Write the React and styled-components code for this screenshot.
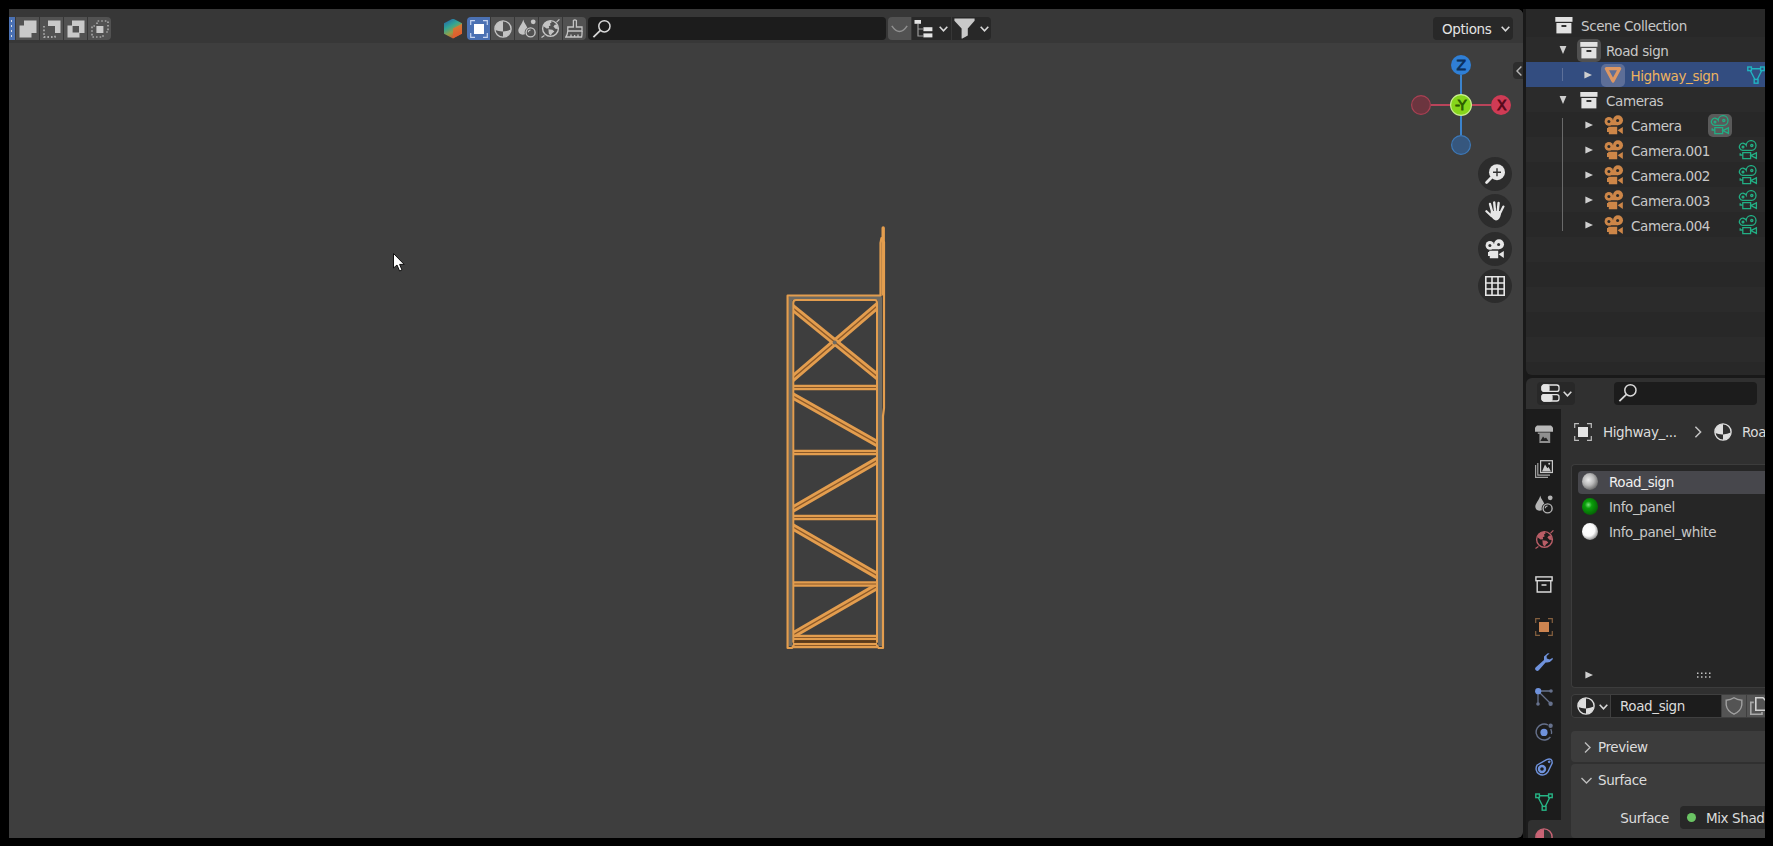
import styled, { createGlobalStyle } from 'styled-components'

const GlobalStyle = createGlobalStyle`
    * {
        box-sizing: border-box;
    }

    body {
        margin: 0;
        background: #000000;
        overflow: hidden;
    }

    svg {
        display: block;
        flex: none;
    }
`

const Screen = styled.div`
    display: flex;
    width: 1773px;
    height: 846px;
    padding: 9px 8px 8px 9px;
    background: #000000;
    font-family: 'DejaVu Sans', sans-serif;
    font-size: 13.5px;
    letter-spacing: -0.4px;
    line-height: 18px;
    color: #d6d6d6;
    white-space: nowrap;
    cursor: default;
`

/* ---------- icons ---------- */

const Chevron = ({ color = '#d8d8d8', size = 9 }) => (
    <svg width={size} height={size} viewBox="0 0 9 9" fill="none" stroke={color} strokeWidth="1.6">
        <path d="M0.7 2.8 L4.5 6.8 L8.3 2.8" />
    </svg>
)

const SearchIcon = () => (
    <svg width="20" height="20" viewBox="0 0 20 20" fill="none" stroke="#d8d8d8" strokeWidth="1.5">
        <circle cx="12.4" cy="7.3" r="5.6" />
        <path d="M8.4 11.3 L1.4 18.2" strokeWidth="1.8" />
    </svg>
)

const ObjectIcon = ({ fill = '#e4e4e4', line = '#bdbdbd' }) => (
    <svg width="18" height="18" viewBox="0 0 18 18">
        <rect x="4" y="4" width="10" height="10" fill={fill} />
        <path
            d="M0.7 5 V0.7 H5 M13 0.7 H17.3 V5 M17.3 13 V17.3 H13 M5 17.3 H0.7 V13"
            fill="none"
            stroke={line}
            strokeWidth="1.2"
        />
    </svg>
)

const MaterialIcon = ({ color = '#dedede' }) => (
    <svg width="18" height="18" viewBox="0 0 18 18">
        <circle cx="9" cy="9" r="8.1" fill="none" stroke={color} strokeWidth="1.4" />
        <path d="M9 1 A8 8 0 0 0 1.2 10 Q5 11.6 9 11.4 Z" fill={color} />
        <path d="M9 11.4 Q13.5 11.2 16.8 9.5 A8 8 0 0 1 9 17 Z" fill={color} />
    </svg>
)

const SceneIcon = ({ color = '#c4c4c4' }) => (
    <svg width="18" height="19" viewBox="0 0 18 19">
        <path
            d="M5.2 0.5 C6 4 8.6 6.6 9.3 8.7 C7 10 6.2 12.5 6.9 15.3 C3.5 16.7 0.3 14.7 0.3 11.6 C0.3 8.5 4.3 5 5.2 0.5 Z"
            fill={color}
        />
        <circle cx="15.2" cy="2.8" r="2.4" fill={color} />
        <circle cx="12.6" cy="13.4" r="4.5" fill="none" stroke={color} strokeWidth="1.4" />
        <path d="M10.3 13.3 A2.3 2.3 0 0 1 12.6 11" fill="none" stroke={color} strokeWidth="1.2" />
    </svg>
)

const WorldIcon = ({ color = '#c4c4c4' }) => (
    <svg width="19" height="19" viewBox="0 0 19 19">
        <circle cx="9.5" cy="9.5" r="7.9" fill="none" stroke={color} strokeWidth="1.4" />
        <path d="M3 4.8 Q6 1.2 9.8 2 L10.6 3.4 L9 4.6 L9.6 6.4 L7.8 7.2 L8.2 9.2 L5.6 9.6 L2.4 7.2 Z" fill={color} />
        <path d="M7.4 10.2 L11.4 10.8 L13.4 12.6 L11 14.4 L9.6 16.8 L7.8 14.6 Z" fill={color} />
        <path d="M12.4 7.6 L14 5.4 L16.6 6.2 L17 10 L14.4 9.8 Z" fill={color} />
        <path d="M0.5 18.4 L3.4 16.4 M15.6 3.2 L18.4 0.4" stroke={color} strokeWidth="1.2" />
    </svg>
)

const BrushIcon = () => (
    <svg width="19" height="20" viewBox="0 0 19 20" fill="none" stroke="#c4c4c4" strokeWidth="1.3">
        <path d="M8.4 8 V1.6 Q9.9 0.2 11.4 1.6 V8 H17 V12 H2.8 V8 Z" />
        <path d="M2.8 12 Q2.4 16.4 0.8 18 H16.6 Q17.2 15.4 17 12 M6 18 V15.6 M9.6 18 V16 M13 18 V15.6" />
    </svg>
)

const HexIcon = () => (
    <HexShape>
        <HexCut />
    </HexShape>
)

const HexShape = styled.div`
    width: 18px;
    height: 20px;
    clip-path: polygon(50% 0, 100% 24%, 100% 76%, 50% 100%, 0 76%, 0 24%);
    background: linear-gradient(150deg, #2565a8 5%, #31a594 35%, #8fa04a 58%, #d8562c 80%);
`

const HexCut = styled.div`
    width: 18px;
    height: 20px;
    clip-path: polygon(50% 50%, 100% 26%, 100% 76%, 50% 100%);
    background: linear-gradient(160deg, #b9a145, #e0602d 75%);
`

const CollectionIcon = ({ outline }) => (
    <svg width="18" height="17" viewBox="0 0 18 17">
        {outline ? (
            <g fill="none" stroke="#dadada" strokeWidth="1.4">
                <rect x="0.9" y="0.9" width="16.2" height="3.8" />
                <path d="M2.2 5 V16 H15.8 V5 M6.5 9 H11.5" />
            </g>
        ) : (
            <g>
                <rect x="0.3" y="0" width="17.2" height="4.8" fill="#e2e2e2" />
                <rect x="1.4" y="6" width="15" height="10.4" fill="#e2e2e2" />
                <rect x="6.3" y="8" width="5.2" height="2" rx="0.8" fill="#2f2f2f" />
            </g>
        )}
    </svg>
)

const CameraIcon = ({ color = '#cd8648', hole = '#2a2a2a' }) => (
    <svg width="20" height="20" viewBox="0 0 20 20">
        <g fill={color}>
            <circle cx="4.9" cy="6.4" r="4.3" />
            <circle cx="14" cy="5.2" r="5" />
            <path d="M5 6 H14 V10.2 H5 Z" />
            <path d="M4.2 11.8 H13.2 V19.2 H4.8 V17 H3 V13 H4.2 Z" />
            <path d="M13.6 15.3 L18.8 12 V19 Z" />
        </g>
        <circle cx="4.9" cy="6.6" r="1.5" fill={hole} />
        <circle cx="13.6" cy="5.4" r="1.5" fill={hole} />
    </svg>
)

const CameraDataIcon = () => (
    <svg width="20" height="20" viewBox="0 0 20 20" fill="none" stroke="#22ae84" strokeWidth="1.3">
        <path d="M4.6 10.4 A3.6 3.6 0 1 1 8.2 5.2 A4.9 4.9 0 1 1 13.6 10.4 Z" />
        <circle cx="5" cy="7" r="0.9" />
        <circle cx="13.8" cy="5.6" r="1.1" />
        <path d="M4.8 12.6 H12.6 V18.6 H4.8 Z M4.8 15 H2.2 V13.2 M12.8 15.6 L18.4 12.8 V18.4 Z" />
    </svg>
)

const MeshIcon = ({ color }) => (
    <svg width="18" height="18" viewBox="0 0 18 18" fill="none" stroke={color} strokeWidth="1.4">
        <rect x="0.8" y="1" width="3.6" height="3.6" />
        <rect x="13.6" y="1" width="3.6" height="3.6" />
        <rect x="7.2" y="13.4" width="3.8" height="3.8" />
        <path d="M4.6 2.8 H13.4 M3.4 4.8 L7.8 13.2 M14.6 4.8 L10.4 13.2" />
    </svg>
)

const MeshObjectIcon = () => (
    <svg width="18" height="18" viewBox="0 0 18 18">
        <path d="M2.3 2.6 H15.7 L9 15 Z" fill="none" stroke="#dd9763" strokeWidth="3.2" strokeLinejoin="round" />
    </svg>
)

const Disclosure = ({ open }) => (
    <svg width="8" height="8" viewBox="0 0 8 8" fill="#cfcfcf">
        <path d={open ? 'M0.6 0 H7.4 L4 8 Z' : 'M0.4 0.4 L8 4 L0.4 7.6 Z'} />
    </svg>
)

const PrinterIcon = () => (
    <svg width="18" height="18" viewBox="0 0 18 18">
        <path d="M0 6.8 V2.4 L2 0.5 H16 L18 2.4 V6.8 Z" fill="#b8b8b8" />
        <path d="M2.8 7.4 H15.2 V18 H4.4 V9 H2.8 Z" fill="#8f8f8f" />
        <path d="M5.4 16 L8 11.5 L9.8 13.6 L11 12.4 L13.4 16 Z" fill="#232323" />
    </svg>
)

const ViewLayerIcon = () => (
    <svg width="18" height="18" viewBox="0 0 18 18" fill="none" stroke="#a4a4a4" strokeWidth="1.2">
        <path d="M0.6 5 V17.4 H13 M2.8 3 V15.2 H15" />
        <rect x="5.6" y="0.7" width="11.8" height="11.8" stroke="#c8c8c8" />
        <path d="M7 11.6 L10 4.5 L12.4 8.2 L13.6 7 L16 11.6 Z" fill="#c8c8c8" stroke="none" />
        <circle cx="14.2" cy="3.8" r="1" fill="#c8c8c8" stroke="none" />
    </svg>
)

const WrenchIcon = () => (
    <svg width="18" height="18" viewBox="0 0 18 18" fill="#6f92dc">
        <path d="M12.8 0.3 L9 3.4 V7 L0.8 14.2 A2.1 2.1 0 0 0 3.8 17.2 L10.6 9.4 Q15 10.2 17.6 6.6 L17.8 4.8 L14.6 6.6 L11.8 5.4 L11.6 3 L14.6 0.6 Z" />
    </svg>
)

const ParticlesIcon = () => (
    <svg width="18" height="18" viewBox="0 0 18 18">
        <path d="M3 3 H16 M3 3 V16 M3 3 L16 16" stroke="#66718c" strokeWidth="1.3" />
        <circle cx="3.2" cy="3.2" r="3.1" fill="#6f92dc" />
        <circle cx="16" cy="3" r="1.8" fill="#66718c" />
        <circle cx="3" cy="16" r="1.8" fill="#66718c" />
        <circle cx="15.6" cy="15.8" r="2.2" fill="#66718c" />
    </svg>
)

const PhysicsIcon = () => (
    <svg width="18" height="18" viewBox="0 0 18 18">
        <path d="M13 2 A8 8 0 1 0 15.4 14" fill="none" stroke="#66718c" strokeWidth="1.4" />
        <circle cx="9" cy="9.4" r="3.6" fill="#6f92dc" />
        <circle cx="15.6" cy="2.8" r="2.2" fill="#66718c" />
        <path d="M15.8 6 Q17 9 16.4 11" fill="none" stroke="#66718c" strokeWidth="1.3" />
    </svg>
)

const ConstraintIcon = () => (
    <svg width="18" height="18" viewBox="0 0 18 18" fill="none" stroke="#6f92dc">
        <path d="M2.2 7 L11.6 1.6 Q17.4 -0.4 17.2 5 L12.8 14.2 A6.4 6.4 0 1 1 2.2 7 Z" strokeWidth="1.4" />
        <circle cx="7" cy="11" r="3" strokeWidth="2.4" />
        <circle cx="14.2" cy="3.8" r="0.9" fill="#6f92dc" />
    </svg>
)

const ShieldIcon = () => (
    <svg width="18" height="18" viewBox="0 0 18 18" fill="none" stroke="#a0a0a0" strokeWidth="1.4">
        <path d="M9 0.8 Q12 3 16.8 3.2 V8 Q16 14 9 17.2 Q2 14 1.2 8 V3.2 Q6 3 9 0.8 Z" />
    </svg>
)

const CopyIcon = () => (
    <svg width="18" height="18" viewBox="0 0 18 18" fill="none" stroke="#d0d0d0" strokeWidth="1.6">
        <path d="M5.8 0.8 H13 L17.2 5 V13.2 H5.8 Z" />
        <path d="M3.8 5.4 H0.8 V17.2 H12 V15" stroke="#a8a8a8" />
    </svg>
)

/* ---------- 3D viewport ---------- */

const Viewport = styled.main`
    position: relative;
    display: flex;
    flex-direction: column;
    width: 1514px;
    height: 829px;
    background: #3e3e3e;
    border-radius: 0 6px 6px 0;
    overflow: hidden;
`

const ToolBar = styled.header`
    display: flex;
    align-items: center;
    height: 34px;
    padding: 5px 10px 0 0;
    background: #373737;
`

const ButtonStrip = styled.div`
    display: flex;
    gap: 1px;
    border-radius: ${(props) => props.$radius || '4px'};
    overflow: hidden;
    margin-left: ${(props) => props.$gap}px;
`

const ToolButton = styled.button`
    display: flex;
    align-items: center;
    justify-content: center;
    gap: ${(props) => props.$gap || 0}px;
    width: ${(props) => props.$width || 23}px;
    height: 23px;
    padding: 0 ${(props) => (props.$dark ? 1 : 0)}px 0 0;
    border: 0;
    background: ${(props) => (props.$active ? '#4b71b3' : props.$dark ? '#282828' : '#525252')};
`

const SearchField = styled.div`
    display: flex;
    align-items: center;
    width: ${(props) => props.$width}px;
    height: 23px;
    padding-left: 4px;
    border-radius: 4px;
    background: #1c1c1c;
    margin-left: ${(props) => props.$gap}px;
`

const OptionsButton = styled.button`
    display: flex;
    align-items: center;
    justify-content: space-between;
    width: 80px;
    height: 23px;
    margin-left: auto;
    padding: 0 3px 0 9px;
    border: 0;
    border-radius: 4px;
    background: #282828;
    color: #e4e4e4;
    font: inherit;
    letter-spacing: -0.4px;
`

const SelectModeIcon = ({ mode }) => (
    <svg width="18" height="18" viewBox="0 0 18 18" fill="#c9c9c9">
        {mode === 'extend' && <path d="M5 0.5 H17.5 V13 H12.5 V17.5 H0.5 V5.5 H5 Z" />}
        {mode === 'subtract' && (
            <g>
                <path d="M5 0.5 H17.5 V13 H12 V6 H5 Z" />
                <path d="M1 6 V17 H12 V14" fill="none" stroke="#c9c9c9" strokeWidth="1.3" strokeDasharray="1.6 2" />
            </g>
        )}
        {mode === 'difference' && (
            <path fillRule="evenodd" d="M5 0.5 H17.5 V13 H12.5 V17.5 H0.5 V5.5 H5 Z M5.6 6 H12 V12.4 H5.6 Z" />
        )}
        {mode === 'intersect' && (
            <g>
                <rect x="5.4" y="6" width="7" height="7" />
                <path
                    d="M6 4 V1 H17 V12 H14 M4 6 H1 V17 H12 V14"
                    fill="none"
                    stroke="#c9c9c9"
                    strokeWidth="1.2"
                    strokeDasharray="1.6 2"
                />
            </g>
        )}
    </svg>
)

const FirstMode = styled.div`
    width: 6px;
    height: 23px;
    padding: 3px 1px 3px 2px;
    background: #4b71b3;

    &::after {
        content: '';
        display: block;
        width: 1px;
        height: 17px;
        background: repeating-linear-gradient(#dddddd 0 2px, transparent 2px 5px);
    }
`

const TreeIcon = () => (
    <svg width="19" height="18" viewBox="0 0 19 18">
        <path d="M4 4 V16 H9 M4 9 H9" fill="none" stroke="#9a9a9a" strokeWidth="1.2" />
        <rect x="0.5" y="0" width="6.5" height="3.8" fill="#e4e4e4" />
        <rect x="9.4" y="7.2" width="9" height="4" fill="#e4e4e4" />
        <rect x="9.4" y="13.4" width="9" height="4" fill="#e4e4e4" />
    </svg>
)

const FilterIcon = () => (
    <svg width="21" height="21" viewBox="0 0 21 21" fill="#c9c9c9">
        <path d="M0.4 0.6 H20.6 V2.8 L13.8 10.4 V17.4 L8.4 20.6 H7.6 V10.4 L0.4 2.8 Z" />
    </svg>
)

const Scene = styled.div`
    position: relative;
    flex: 1;
`

const Canvas = styled.svg`
    position: absolute;
    inset: 0;
`

const ORANGE = '#e39d4e'

const rungs = [387.5, 452.5, 517.5, 584, 637.5, 645.5]

const braces = [
    [881, 302.8, 788, 382.3],
    [788, 304, 881, 379.6],
    [788, 393.2, 881, 445.8],
    [881, 458.1, 788, 511.9],
    [788, 524.1, 881, 577.9],
    [881, 584.1, 788, 637.9],
]

const Truss = () => (
    <g fill="none" stroke={ORANGE} strokeLinejoin="round" strokeLinecap="round">
        <clipPath id="bay">
            <rect x="793" y="299" width="84" height="348" />
        </clipPath>
        <path d="M790.5 646 V298 H880 V646" stroke="#6e6a62" strokeWidth="4" strokeLinecap="butt" />
        <g clipPath="url(#bay)">
            {braces.map(([x1, y1, x2, y2], i) => (
                <g key={i}>
                    <path d={`M${x1} ${y1} L${x2} ${y2}`} strokeWidth="7" />
                    <path d={`M${x1} ${y1} L${x2} ${y2}`} stroke="#8a5828" strokeWidth="1.3" />
                </g>
            ))}
        </g>
        {rungs.map((y) => (
            <g key={y} strokeLinecap="butt">
                <path d={`M793 ${y} H877`} strokeWidth="5.6" />
                <path d={`M793 ${y} H877`} stroke="#8a5828" strokeWidth="1.1" />
            </g>
        ))}
        <path d="M794 641.5 H876" stroke="#5d3a17" strokeWidth="2.4" strokeLinecap="butt" />
        <circle cx="834.7" cy="342.5" r="2" fill="#6e6a62" stroke="none" />
        <path d="M793.3 642 V303 Q793.3 300 796 300 H875 Q877 300 877 303 V642" strokeWidth="2" />
        <path d="M883.2 228 V294" strokeWidth="3.4" />
        <path
            d="M880.7 295.5 H787.6 V648 H792 L793.5 645.5 M877 645.5 L878.5 648 H883 V416 L884 408 V242 M881.5 238 L880.5 243 V295"
            strokeWidth="2.2"
        />
    </g>
)

const Gizmo = () => (
    <g>
        <path d="M1461 75 V135" stroke="#3b83cd" strokeWidth="2" />
        <path d="M1431 105 H1491" stroke="#b9445a" strokeWidth="2" />
        <circle cx="1461" cy="65" r="10" fill="#2f7fd6" />
        <circle cx="1501" cy="105" r="10" fill="#cf3b55" />
        <circle cx="1421" cy="105" r="9.4" fill="#6c353f" stroke="#a84053" strokeWidth="1.2" />
        <circle cx="1461" cy="145" r="9.4" fill="#36577e" stroke="#3d79b8" strokeWidth="1.2" />
        <circle cx="1461" cy="105" r="10.4" fill="#86d61b" stroke="#c9ef8f" strokeWidth="1.2" />
        <AxisLabel x="1461" y="70" fill="#0b2f5c" stroke="#0b2f5c">
            Z
        </AxisLabel>
        <AxisLabel x="1501.5" y="110" fill="#57091a" stroke="#57091a">
            X
        </AxisLabel>
        <AxisLabel x="1460.5" y="110" fill="#2c5c00" stroke="#2c5c00">
            -Y
        </AxisLabel>
    </g>
)

const AxisLabel = styled.text`
    font-family: 'DejaVu Sans', sans-serif;
    font-size: 14px;
    stroke-width: 0.8px;
    letter-spacing: -0.4px;
    text-anchor: middle;
`

const Pointer = () => (
    <path
        d="M393.5 253.5 V268 L397 265 L399.6 271 L402 270 L399.6 264.4 H404.2 Z"
        fill="#ffffff"
        stroke="#111111"
        strokeWidth="1"
    />
)

const NavButtons = styled.div`
    position: absolute;
    top: 114px;
    right: 11px;
    display: flex;
    flex-direction: column;
    gap: 3.4px;
`

const NavButton = styled.button`
    display: flex;
    align-items: center;
    justify-content: center;
    width: 34px;
    height: 34px;
    padding: 0;
    border: 0;
    border-radius: 50%;
    background: #2c2c2c;
`

const SidebarTab = styled.div`
    position: absolute;
    top: 19px;
    right: 0;
    display: flex;
    align-items: center;
    justify-content: center;
    width: 10px;
    height: 17px;
    padding-left: 1px;
    border-radius: 4px 0 0 4px;
    background: #2d2d2d;
`

const ZoomIcon = () => (
    <svg width="20" height="20" viewBox="0 0 20 20">
        <circle cx="12" cy="8.2" r="8" fill="#e6e6e6" />
        <path d="M6.4 13.6 L1.6 18.4" stroke="#e6e6e6" strokeWidth="2.8" strokeLinecap="round" />
        <path d="M8 8.2 H16 M12 4.2 V12.2" stroke="#303030" strokeWidth="1.4" />
    </svg>
)

const HandIcon = () => (
    <svg width="20" height="20" viewBox="0 0 20 20" fill="none" stroke="#e6e6e6" strokeLinecap="round">
        <path d="M5 3 L7.2 11 M9.2 1.4 L10 10 M13.6 1.9 L12.8 10" strokeWidth="2.4" />
        <path d="M18.4 5.6 L15.2 12 M1.4 10.2 L6.4 15" strokeWidth="2.2" />
        <path d="M6 10 H15.8 L16 13 Q14.8 19.4 11 19.4 Q8.4 19.4 5 14 Z" fill="#e6e6e6" stroke="none" />
    </svg>
)

const GridIcon = () => (
    <svg width="20" height="20" viewBox="0 0 20 20" fill="none" stroke="#e6e6e6" strokeWidth="1.6">
        <path d="M0.8 0.8 H19.2 V19.2 H0.8 Z M7 1 V19 M13 1 V19 M1 7 H19 M1 13 H19" />
    </svg>
)

/* ---------- outliner ---------- */

const SidePanels = styled.aside`
    display: flex;
    flex-direction: column;
    gap: 3px;
    width: 242px;
    height: 829px;
    padding-left: 3px;
    background: #191919;
`

const Outliner = styled.section`
    flex: none;
    height: 366px;
    padding-top: 3px;
    border-radius: 0 0 0 6px;
    background: repeating-linear-gradient(#282828 0 25px, #2b2b2b 25px 50px) 0 3px;
    overflow: hidden;
`

const TreeRow = styled.div`
    display: flex;
    align-items: center;
    height: 25px;
    padding: 1px 0 0 ${(props) => props.$indent}px;
    background: ${(props) => (props.$selected ? '#334d80' : 'transparent')};
    color: ${(props) => (props.$selected ? '#edb35e' : '#c8c8c8')};
`

const TreeArrow = styled.span`
    display: flex;
    justify-content: center;
    width: 16px;
`

const TreeIconBox = styled.span`
    display: flex;
    align-items: center;
    justify-content: center;
    flex: none;
    width: 24px;
    height: 23px;
    border-radius: 5px;
    background: ${(props) => props.$fill || 'transparent'};
    margin-left: ${(props) => props.$gap || 0}px;
`

const TreeLabel = styled.span`
    flex: none;
    margin-left: 5.5px;
    padding-top: 2px;
    width: ${(props) => (props.$width ? props.$width + 'px' : 'auto')};
`

const Branch = styled.div`
    position: relative;

    &::before {
        content: '';
        position: absolute;
        left: 36px;
        top: ${(props) => props.$top}px;
        bottom: ${(props) => props.$bottom}px;
        width: 1px;
        background: ${(props) => props.$line};
    }
`

const cameras = ['Camera', 'Camera.001', 'Camera.002', 'Camera.003', 'Camera.004']

/* ---------- properties editor ---------- */

const Properties = styled.section`
    flex: 1;
    display: flex;
    flex-direction: column;
    background: #303030;
    border-radius: 6px 0 0 0;
    overflow: hidden;
`

const PropertiesHeader = styled.div`
    display: flex;
    align-items: center;
    height: 31px;
    padding: 0 0 1px 11px;
`

const EditorButton = styled.button`
    display: flex;
    align-items: center;
    justify-content: space-between;
    width: 38px;
    height: 23px;
    padding: 0 3px 0 4px;
    border: 0;
    border-radius: 4px;
    background: #282828;
`

const PropertiesBody = styled.div`
    display: flex;
    flex: 1;
    min-height: 0;
`

const Tabs = styled.nav`
    display: flex;
    flex-direction: column;
    flex: none;
    width: 35px;
    padding: 8px 0 0 2px;
    background: #1c1c1c;
    overflow: hidden;
`

const Tab = styled.div`
    display: flex;
    align-items: center;
    justify-content: center;
    flex: none;
    height: 34px;
    margin-top: ${(props) => props.$gap ?? 1}px;
    padding-right: 1px;
    border-radius: 4px 0 0 4px;
    background: ${(props) => (props.$active ? '#303030' : 'transparent')};
`

const Content = styled.div`
    display: flex;
    flex-direction: column;
    width: 204px;
    padding-left: 10px;
    color: #dcdcdc;
    overflow: hidden;
`

const Breadcrumb = styled.div`
    display: flex;
    align-items: center;
    height: 45px;
    padding-left: 3px;
    flex: none;
`

const CrumbLabel = styled.span`
    flex: none;
    width: ${(props) => (props.$width ? props.$width + 'px' : 'auto')};
    margin-left: ${(props) => props.$gap || 11}px;
`

const CrumbArrow = styled.svg`
    margin-right: 10px;
`

const SlotList = styled.div`
    display: flex;
    flex-direction: column;
    flex: none;
    height: 224px;
    margin-top: 10px;
    padding: 6px 0 0 6px;
    border: 1px solid #3c3c3c;
    border-right: 0;
    border-radius: 4px 0 0 4px;
    background: #262626;
`

const Slot = styled.div`
    display: flex;
    align-items: center;
    gap: 11px;
    flex: none;
    height: 23px;
    margin-bottom: 2px;
    padding: 0 0 2px 4px;
    border-radius: 4px 0 0 4px;
    background: ${(props) => (props.$selected ? '#47474c' : 'transparent')};
    color: ${(props) => (props.$selected ? '#f0f0f0' : '#c8c8c8')};
`

const Ball = styled.span`
    width: 16px;
    height: 17px;
    border-radius: 50%;
    background: radial-gradient(circle at 40% 40%, ${(props) => props.$shades});
`

const SlotFooter = styled.div`
    display: flex;
    align-items: center;
    justify-content: space-between;
    margin-top: auto;
    padding: 0 54px 8px 7px;
`

const GripDots = () => (
    <svg width="14" height="6" viewBox="0 0 14 6" fill="#c4c4c4">
        {[0, 4, 8, 12].map((x) => (
            <path key={x} d={`M${x} 0.5 h1.5 v1.5 h-1.5 Z M${x} 4.3 h1.5 v1.5 h-1.5 Z`} />
        ))}
    </svg>
)

const MaterialRow = styled.div`
    display: flex;
    gap: 1px;
    flex: none;
    height: 24px;
    width: 214px;
    margin-top: 6px;
    border: 1px solid #3f3f3f;
    border-radius: 4px 0 0 4px;
    background: #3f3f3f;
    overflow: hidden;
`

const MaterialPicker = styled.button`
    display: flex;
    align-items: center;
    gap: 4px;
    width: 38px;
    padding: 0 0 0 5px;
    border: 0;
    background: #282828;
`

const MaterialName = styled.div`
    display: flex;
    align-items: center;
    width: 110px;
    padding-left: 9px;
    background: #1c1c1c;
`

const MaterialAction = styled.button`
    display: flex;
    align-items: center;
    justify-content: center;
    width: 24px;
    padding: 0;
    border: 0;
    background: #545454;
`

const Panel = styled.div`
    flex: ${(props) => (props.$open ? '1' : 'none')};
    margin-top: ${(props) => props.$gap}px;
    border-radius: 4px 0 0 4px;
    background: #3c3c3c;
`

const PanelTitle = styled.div`
    display: flex;
    align-items: center;
    gap: 6px;
    height: 31px;
    padding: 1px 0 0 10px;
`

const PanelArrow = ({ open }) => (
    <svg width="11" height="11" viewBox="0 0 11 11" fill="none" stroke="#bdbdbd" strokeWidth="1.4">
        <path d={open ? 'M0.5 3 L5.5 8 L10.5 3' : 'M4 0.5 L9 5.5 L4 10.5'} />
    </svg>
)

const SurfaceRow = styled.div`
    display: flex;
    align-items: center;
    justify-content: flex-end;
    margin-top: 11px;
`

const ShaderField = styled.div`
    display: flex;
    align-items: center;
    gap: 10px;
    width: 85px;
    height: 23px;
    margin-left: 11px;
    padding-left: 7px;
    border-radius: 4px 0 0 4px;
    background: #282828;
    overflow: hidden;
`

const Socket = styled.span`
    flex: none;
    width: 9px;
    height: 9px;
    border-radius: 50%;
    background: #6bc464;
`

const App = () => {
    return (
        <Screen>
            <GlobalStyle />
            <Viewport>
                <ToolBar>
                    <ButtonStrip $gap={0} $radius="0 4px 4px 0">
                        <FirstMode />
                        {['extend', 'subtract', 'difference', 'intersect'].map((mode) => (
                            <ToolButton key={mode}>
                                <SelectModeIcon mode={mode} />
                            </ToolButton>
                        ))}
                    </ButtonStrip>
                    <ButtonStrip $gap={333} $radius="0">
                        <HexIcon />
                    </ButtonStrip>
                    <ButtonStrip $gap={5}>
                        <ToolButton $active>
                            <ObjectIcon fill="#ffffff" line="#c6d4ee" />
                        </ToolButton>
                        <ToolButton>
                            <MaterialIcon color="#c4c4c4" />
                        </ToolButton>
                        <ToolButton>
                            <SceneIcon />
                        </ToolButton>
                        <ToolButton>
                            <WorldIcon />
                        </ToolButton>
                        <ToolButton>
                            <BrushIcon />
                        </ToolButton>
                    </ButtonStrip>
                    <SearchField $width={298} $gap={2}>
                        <SearchIcon />
                    </SearchField>
                    <ButtonStrip $gap={2}>
                        <ToolButton>
                            <svg width="17" height="8" viewBox="0 0 17 8" fill="none" stroke="#8f8f8f" strokeWidth="1.5">
                                <path d="M0.8 0.8 Q8.5 12 16.2 0.8" />
                            </svg>
                        </ToolButton>
                        <ToolButton $dark $width={39} $gap={6}>
                            <TreeIcon />
                            <Chevron />
                        </ToolButton>
                        <ToolButton $dark $width={39} $gap={5}>
                            <FilterIcon />
                            <Chevron />
                        </ToolButton>
                    </ButtonStrip>
                    <OptionsButton>
                        Options
                        <Chevron />
                    </OptionsButton>
                </ToolBar>
                <Scene>
                    <Canvas width="1514" height="795" viewBox="9 43 1514 795">
                        <Truss />
                        <Gizmo />
                        <Pointer />
                    </Canvas>
                    <SidebarTab>
                        <svg width="6" height="10" viewBox="0 0 6 10" fill="none" stroke="#b4b4b4" strokeWidth="1.4">
                            <path d="M5.4 0.6 L1 5 L5.4 9.4" />
                        </svg>
                    </SidebarTab>
                    <NavButtons>
                        <NavButton>
                            <ZoomIcon />
                        </NavButton>
                        <NavButton>
                            <HandIcon />
                        </NavButton>
                        <NavButton>
                            <CameraIcon color="#e6e6e6" hole="#303030" />
                        </NavButton>
                        <NavButton>
                            <GridIcon />
                        </NavButton>
                    </NavButtons>
                </Scene>
            </Viewport>
            <SidePanels>
                <Outliner>
                    <TreeRow $indent={25.5}>
                        <TreeIconBox>
                            <CollectionIcon />
                        </TreeIconBox>
                        <TreeLabel>Scene Collection</TreeLabel>
                    </TreeRow>
                    <TreeRow $indent={29}>
                        <TreeArrow>
                            <Disclosure open />
                        </TreeArrow>
                        <TreeIconBox $fill="#505050" $gap={5.5}>
                            <CollectionIcon />
                        </TreeIconBox>
                        <TreeLabel>Road sign</TreeLabel>
                    </TreeRow>
                    <Branch $top={6} $bottom={6} $line="#5d7099">
                        <TreeRow $indent={54.5} $selected>
                            <TreeArrow>
                                <Disclosure />
                            </TreeArrow>
                            <TreeIconBox $fill="#5d6e97" $gap={5}>
                                <MeshObjectIcon />
                            </TreeIconBox>
                            <TreeLabel $width={116.5}>Highway_sign</TreeLabel>
                            <MeshIcon color="#21b3c0" />
                        </TreeRow>
                    </Branch>
                    <TreeRow $indent={29}>
                        <TreeArrow>
                            <Disclosure open />
                        </TreeArrow>
                        <TreeIconBox $gap={5.5}>
                            <CollectionIcon />
                        </TreeIconBox>
                        <TreeLabel>Cameras</TreeLabel>
                    </TreeRow>
                    <Branch $top={6} $bottom={6} $line="#6a6a6a">
                        {cameras.map((name, i) => (
                            <TreeRow key={name} $indent={54.5}>
                                <TreeArrow>
                                    <Disclosure />
                                </TreeArrow>
                                <TreeIconBox $gap={5}>
                                    <CameraIcon />
                                </TreeIconBox>
                                <TreeLabel $width={i === 0 ? 76.5 : 104.5}>{name}</TreeLabel>
                                <TreeIconBox $fill={i === 0 ? '#5a5a5a' : undefined}>
                                    <CameraDataIcon />
                                </TreeIconBox>
                            </TreeRow>
                        ))}
                    </Branch>
                </Outliner>
                <Properties>
                    <PropertiesHeader>
                        <EditorButton>
                            <svg width="19" height="18" viewBox="0 0 19 18" fill="none" stroke="#e4e4e4" strokeWidth="1.3">
                                <rect x="1" y="1" width="17" height="6.4" rx="2.2" />
                                <rect x="1" y="10.6" width="17" height="6.4" rx="2.2" />
                                <rect x="1" y="1" width="7" height="6.4" rx="2" fill="#e4e4e4" />
                                <rect x="1" y="10.6" width="10" height="6.4" rx="2" fill="#e4e4e4" />
                            </svg>
                            <Chevron />
                        </EditorButton>
                        <SearchField $width={143} $gap={39}>
                            <SearchIcon />
                        </SearchField>
                    </PropertiesHeader>
                    <PropertiesBody>
                        <Tabs>
                            <Tab $gap={0}>
                                <PrinterIcon />
                            </Tab>
                            <Tab>
                                <ViewLayerIcon />
                            </Tab>
                            <Tab>
                                <SceneIcon color="#b4b4b4" />
                            </Tab>
                            <Tab>
                                <WorldIcon color="#b85d66" />
                            </Tab>
                            <Tab $gap={11}>
                                <CollectionIcon outline />
                            </Tab>
                            <Tab $gap={9}>
                                <ObjectIcon fill="#cc8450" line="#85603f" />
                            </Tab>
                            <Tab>
                                <WrenchIcon />
                            </Tab>
                            <Tab>
                                <ParticlesIcon />
                            </Tab>
                            <Tab>
                                <PhysicsIcon />
                            </Tab>
                            <Tab>
                                <ConstraintIcon />
                            </Tab>
                            <Tab>
                                <MeshIcon color="#27b586" />
                            </Tab>
                            <Tab $active>
                                <MaterialIcon color="#c96475" />
                            </Tab>
                        </Tabs>
                        <Content>
                            <Breadcrumb>
                                <ObjectIcon />
                                <CrumbLabel $width={90}>Highway_...</CrumbLabel>
                                <CrumbArrow width="11" height="12" viewBox="0 0 11 12" fill="none" stroke="#c4c4c4" strokeWidth="1.5">
                                    <path d="M2.4 0.8 L7.6 6 L2.4 11.2" />
                                </CrumbArrow>
                                <MaterialIcon />
                                <CrumbLabel $gap={10}>Roa</CrumbLabel>
                            </Breadcrumb>
                            <SlotList>
                                <Slot $selected>
                                    <Ball $shades="#ececec 0, #b8b8b8 40%, #6e6e6e 72%" />
                                    Road_sign
                                </Slot>
                                <Slot>
                                    <Ball $shades="#7be07b 0, #0aa00a 25%, #056505 72%" />
                                    Info_panel
                                </Slot>
                                <Slot>
                                    <Ball $shades="#ffffff 0, #fafafa 45%, #8a8a8a 76%" />
                                    Info_panel_white
                                </Slot>
                                <SlotFooter>
                                    <Disclosure />
                                    <GripDots />
                                </SlotFooter>
                            </SlotList>
                            <MaterialRow>
                                <MaterialPicker>
                                    <MaterialIcon />
                                    <Chevron />
                                </MaterialPicker>
                                <MaterialName>Road_sign</MaterialName>
                                <MaterialAction>
                                    <ShieldIcon />
                                </MaterialAction>
                                <MaterialAction>
                                    <CopyIcon />
                                </MaterialAction>
                            </MaterialRow>
                            <Panel $gap={13}>
                                <PanelTitle>
                                    <PanelArrow />
                                    Preview
                                </PanelTitle>
                            </Panel>
                            <Panel $gap={2} $open>
                                <PanelTitle>
                                    <PanelArrow open />
                                    Surface
                                </PanelTitle>
                                <SurfaceRow>
                                    Surface
                                    <ShaderField>
                                        <Socket />
                                        Mix Shad
                                    </ShaderField>
                                </SurfaceRow>
                            </Panel>
                        </Content>
                    </PropertiesBody>
                </Properties>
            </SidePanels>
        </Screen>
    )
}

export default App
